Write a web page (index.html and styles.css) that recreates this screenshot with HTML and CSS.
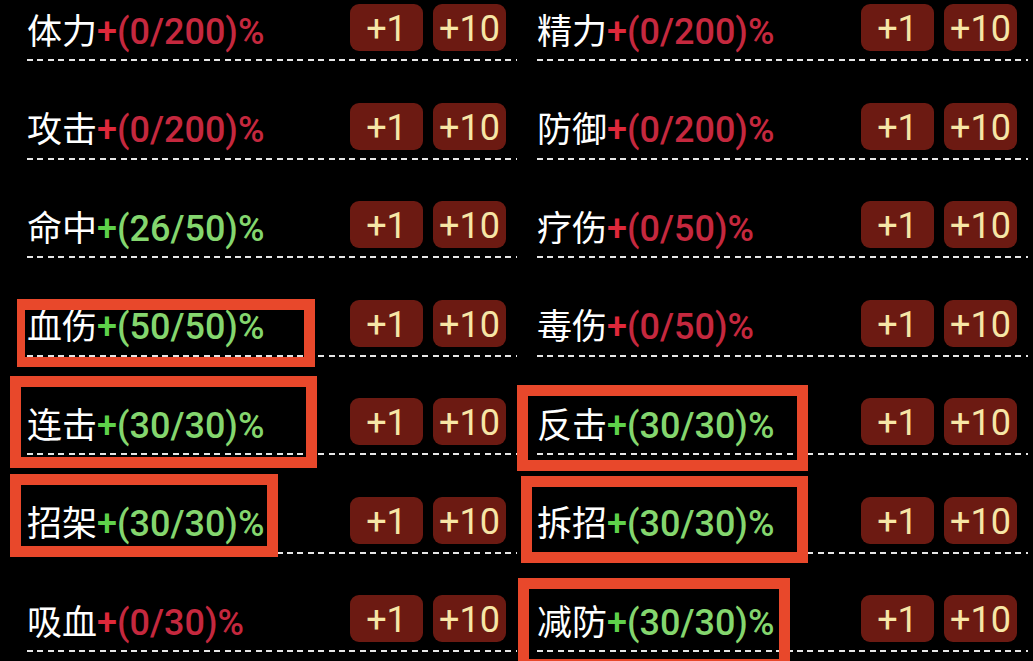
FILE: index.html
```html
<!DOCTYPE html>
<html lang="zh-CN">
<head>
<meta charset="utf-8">
<title>属性加点</title>
<link rel="stylesheet" href="styles.css">
</head>
<body>
<div class="panel">
  <div class="grid">
    <div class="row"><div class="label"><span class="name">体力</span><span class="val red"><b>+</b>(0/200)%</span></div><div class="btns"><span class="btn">+1</span><span class="btn">+10</span></div></div>
    <div class="row"><div class="label"><span class="name">精力</span><span class="val red"><b>+</b>(0/200)%</span></div><div class="btns"><span class="btn">+1</span><span class="btn">+10</span></div></div>
    <div class="row"><div class="label"><span class="name">攻击</span><span class="val red"><b>+</b>(0/200)%</span></div><div class="btns"><span class="btn">+1</span><span class="btn">+10</span></div></div>
    <div class="row"><div class="label"><span class="name">防御</span><span class="val red"><b>+</b>(0/200)%</span></div><div class="btns"><span class="btn">+1</span><span class="btn">+10</span></div></div>
    <div class="row"><div class="label"><span class="name">命中</span><span class="val green"><b>+</b>(26/50)%</span></div><div class="btns"><span class="btn">+1</span><span class="btn">+10</span></div></div>
    <div class="row"><div class="label"><span class="name">疗伤</span><span class="val red"><b>+</b>(0/50)%</span></div><div class="btns"><span class="btn">+1</span><span class="btn">+10</span></div></div>
    <div class="row"><div class="label"><span class="name">血伤</span><span class="val green"><b>+</b>(50/50)%</span></div><div class="btns"><span class="btn">+1</span><span class="btn">+10</span></div></div>
    <div class="row"><div class="label"><span class="name">毒伤</span><span class="val red"><b>+</b>(0/50)%</span></div><div class="btns"><span class="btn">+1</span><span class="btn">+10</span></div></div>
    <div class="row"><div class="label"><span class="name">连击</span><span class="val green"><b>+</b>(30/30)%</span></div><div class="btns"><span class="btn">+1</span><span class="btn">+10</span></div></div>
    <div class="row"><div class="label"><span class="name">反击</span><span class="val green"><b>+</b>(30/30)%</span></div><div class="btns"><span class="btn">+1</span><span class="btn">+10</span></div></div>
    <div class="row"><div class="label"><span class="name">招架</span><span class="val green"><b>+</b>(30/30)%</span></div><div class="btns"><span class="btn">+1</span><span class="btn">+10</span></div></div>
    <div class="row"><div class="label"><span class="name">拆招</span><span class="val green"><b>+</b>(30/30)%</span></div><div class="btns"><span class="btn">+1</span><span class="btn">+10</span></div></div>
    <div class="row"><div class="label"><span class="name">吸血</span><span class="val red"><b>+</b>(0/30)%</span></div><div class="btns"><span class="btn">+1</span><span class="btn">+10</span></div></div>
    <div class="row"><div class="label"><span class="name">减防</span><span class="val green"><b>+</b>(30/30)%</span></div><div class="btns"><span class="btn">+1</span><span class="btn">+10</span></div></div>
  </div>
  <div class="mark m1"></div>
  <div class="mark m2"></div>
  <div class="mark m3"></div>
  <div class="mark m4"></div>
  <div class="mark m5"></div>
  <div class="mark m6"></div>
</div>
</body>
</html>
```
FILE: styles.css
```css
html, body {
  margin: 0;
  padding: 0;
  background: #000;
  height: 661px;
  overflow: hidden;
}
.panel {
  position: relative;
  width: 1033px;
  height: 661px;
  font-family: Roboto, "Noto Sans CJK SC", sans-serif;
}
.grid {
  display: grid;
  grid-template-columns: 490px 491px;
  column-gap: 20px;
  row-gap: 41.5px;
  padding: 4px 0 0 27px;
}
.row {
  display: flex;
  align-items: center;
  justify-content: space-between;
  height: 57px;
  box-sizing: border-box;
  padding: 0 11px 10px 0;
  background: repeating-linear-gradient(90deg, #e6e6e6 0 6px, transparent 6px 10.4px) left bottom / 100% 2px no-repeat;
}
.label {
  font-size: 35px;
  line-height: 40px;
  margin-top: 5px;
  white-space: nowrap;
  display: flex;
  align-items: baseline;
}
.name {
  color: #ffffff;
  font-family: "Noto Sans CJK SC", sans-serif;
}
.val {
  font-size: 36px;
  font-weight: 500;
}
.val b {
  font-weight: 500;
}
.red {
  color: #c5283e;
}
.red b {
  color: #e0283a;
}
.green {
  color: #84d66e;
}
.green b {
  color: #5ed04a;
}
.btns {
  display: flex;
  gap: 10px;
}
.btn {
  width: 73px;
  height: 47px;
  box-sizing: border-box;
  padding-top: 3px;
  border-radius: 9px;
  background: #6c1a12;
  color: #f7e6a6;
  font-size: 36px;
  line-height: 44px;
  text-align: center;
}
.mark {
  position: absolute;
  box-sizing: border-box;
  border: 11px solid #e8482b;
}
.m1 { left: 17px; top: 299px; width: 298px; height: 68px; border-width: 11px 11px 10px 8px; }
.m2 { left: 10px; top: 376px; width: 307px; height: 92px; }
.m3 { left: 10px; top: 474px; width: 268px; height: 83px; }
.m4 { left: 517px; top: 385px; width: 291px; height: 86px; }
.m5 { left: 521px; top: 476px; width: 287px; height: 87px; }
.m6 { left: 518px; top: 578px; width: 272px; height: 92px; }
```
